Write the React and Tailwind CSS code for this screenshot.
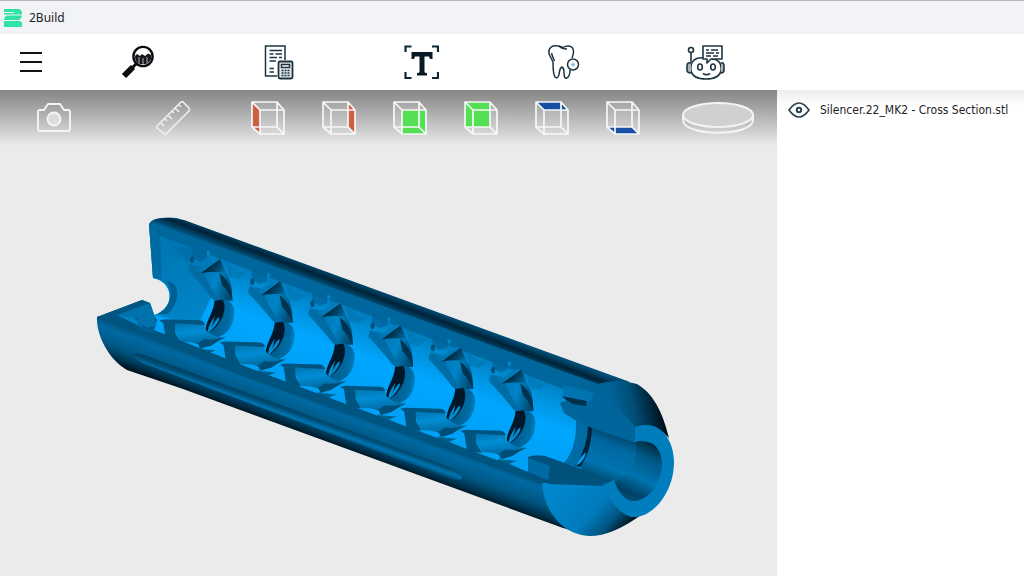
import React from "react";

const cells = [0, 1, 2, 3, 4, 5];

function Logo() {
  return (
    <svg viewBox="0 0 18 18" className="h-[18px] w-[18px]" fill="#2fe3a4" aria-hidden="true">
      <path d="M0 0H14Q18 0 18 4.500V5.500H0V4H10V3H0Z" />
      <path d="M3 6.500H18Q17.500 9.500 15 11H0Q0 8 3 6.500Z" />
      <path d="M0 12H15Q18 12.500 18 14V18H0Z" />
    </svg>
  );
}

function MenuIcon() {
  return (
    <svg viewBox="0 0 24 24" className="h-6 w-6" stroke="#111" strokeWidth="2" aria-hidden="true">
      <path d="M1 3H23M1 12H23M1 21H23" />
    </svg>
  );
}

function InspectIcon() {
  return (
    <svg viewBox="0 0 36 36" className="h-9 w-9" fill="none" aria-hidden="true">
      <circle cx="24" cy="12.500" r="9.600" stroke="#0b0d10" strokeWidth="2.400" />
      <path d="M16 12L18 10L21 12L23 10L26 12L29 9.500L32 11V15Q30 19 27 20H20Q16 18 16 12Z" fill="#14171b" />
      <path d="M20 13V20M24 14V21M28 13V19" stroke="#b5b5b5" strokeWidth="1" />
      <path d="M17 20L13 24" stroke="#0b0d10" strokeWidth="3" />
      <path d="M14 23L5 32" stroke="#0b0d10" strokeWidth="6" />
    </svg>
  );
}

function QuoteIcon() {
  return (
    <svg viewBox="0 0 36 36" className="h-9 w-9" fill="none" stroke="#1d3440" strokeWidth="1.500" aria-hidden="true">
      <path d="M16 32H4.500V2H24V16" />
      <path d="M8.500 6.500H21M8.500 10H12.500M14.500 10H21M8.500 13.500H16M18 13.500H21M8.500 17H15M8.500 24.500H13M8.500 28H13" />
      <rect x="17.500" y="17.500" width="14" height="17" rx="1.500" strokeWidth="1.800" fill="#e3e7e9" />
      <rect x="20.500" y="20.500" width="8" height="3" fill="#fff" />
      <path d="M20.500 26.500H28.500M20.500 29H28.500M20.500 31.500H28.500" strokeDasharray="2 1" />
    </svg>
  );
}

function TextIcon() {
  return (
    <svg viewBox="0 0 36 36" className="h-9 w-9" aria-hidden="true">
      <path d="M2.500 8V2.500H8.500M29 2.500H35V8M35 28V34H29M8.500 34H2.500V28" fill="none" stroke="#102833" strokeWidth="2.200" />
      <path d="M8.500 8H29.500V15H27L26 12.500H21.500V28Q21.500 29 24 29V31.500H14V29Q16.500 29 16.500 28V12.500H12L11 15H8.500Z" fill="#081a23" />
    </svg>
  );
}

function ToothIcon() {
  return (
    <svg viewBox="0 0 36 36" className="h-9 w-9" fill="none" stroke="#1d3440" strokeWidth="1.500" strokeLinejoin="round" aria-hidden="true">
      <path d="M27 14C29 10 30 3 24 2Q21 1.500 18 3.500Q13 1 8 2Q3 4 4 10Q6 14 8 18C8 24 8 30 10 33Q12 35 13.500 32C15 28 14 24 17 23Q19 24 19 29Q19 35 22 34Q25 32 25 26" />
      <path d="M14 2Q17 5 22 5M6.500 9Q7.500 13 9.500 17" />
      <circle cx="28" cy="20.500" r="5.500" />
      <path d="M28 18.500V22.500M26 20.500H30" stroke="#7cbde2" strokeWidth="1.300" />
    </svg>
  );
}

function RobotIcon() {
  return (
    <svg viewBox="0 0 40 36" className="h-9 w-10" fill="none" stroke="#1d3440" strokeWidth="1.600" strokeLinejoin="round" aria-hidden="true">
      <path d="M20 14Q13 13 9 16Q5 20 6 27Q8 35 21 35Q34 35 36 27Q37 20 33 17Q31 15 27 15" />
      <path d="M6 19Q2 18 2 22V26Q2 29 6 29M36 19Q39 18 39 22V26Q39 29 36 29" fill="#a9b3b8" />
      <circle cx="6" cy="6" r="2.500" />
      <path d="M6 9V18" />
      <path d="M18 2H37V15H26L22 19V15H18Z" fill="#fff" />
      <path d="M21 6H24M26 6H33M21 9H29M31 9H34M21 12H26M28 12H33" />
      <ellipse cx="15" cy="23" rx="2.300" ry="3" />
      <ellipse cx="28" cy="23" rx="2.300" ry="3" />
      <path d="M18 29.500Q21.500 32 25 29.500" />
    </svg>
  );
}

function CameraIcon() {
  return (
    <svg viewBox="0 0 36 32" className="h-8 w-9" fill="none" stroke="#f5f5f5" strokeWidth="1.900" strokeLinejoin="round" aria-hidden="true">
      <path d="M4 8H8L12 2H24L28 8H32Q34 8 34 10V27Q34 29 32 29H4Q2 29 2 27V10Q2 8 4 8Z" />
      <circle cx="18" cy="17" r="6.500" fill="#dcdcdc" />
    </svg>
  );
}

function RulerIcon() {
  return (
    <svg viewBox="0 0 36 36" className="h-9 w-9" fill="none" stroke="#f0f0f0" strokeWidth="1.600" strokeLinejoin="round" aria-hidden="true">
      <path d="M2 26L26 2Q28 1 29 3L34 8Q35 10 34 11L11 34Q9 35 8 33L2 28Q1 27 2 26Z" />
      <path d="M6 23L9 26M10 19L12 21M13 15L17 19M17 11L19 13M20 8L24 12M24 5L26 7" />
    </svg>
  );
}

function CubeIcon({ face, color }) {
  return (
    <svg viewBox="0 0 36 36" className="h-9 w-9" fill="none" stroke="#f7f7f7" strokeWidth="1.700" strokeLinejoin="round" aria-hidden="true">
      <path d="M2 2H27L34 10V34H10L2 27Z" fill="#ffffff" fillOpacity=".12" stroke="none" />
      <path d={face} fill={color} stroke="none" />
      <path d="M2 2H27V27H2ZM10 10H34V34H10ZM2 2L10 10M27 2L34 10M2 27L10 34M27 27L34 34" />
    </svg>
  );
}

function PlateIcon() {
  return (
    <svg viewBox="0 0 76 36" className="h-9 w-[76px]" fill="none" stroke="#f4f4f4" strokeWidth="2" aria-hidden="true">
      <path d="M3 15V20C3 37 73 37 73 20V15" />
      <ellipse cx="38" cy="15" rx="35" ry="12" fill="#d0d0d0" />
    </svg>
  );
}

function EyeIcon() {
  return (
    <svg viewBox="0 0 22 18" className="h-[18px] w-[22px]" fill="none" stroke="#29434f" strokeWidth="1.700" aria-hidden="true">
      <path d="M1 9Q11-5 21 9Q11 23 1 9Z" />
      <circle cx="11" cy="9" r="2.200" strokeWidth="2" />
    </svg>
  );
}

function Gradient({ id, from, to, stops }) {
  return (
    <linearGradient id={id} gradientUnits="userSpaceOnUse" x1={from[0]} y1={from[1]} x2={to[0]} y2={to[1]}>
      {stops.map(([at, color]) => (
        <stop key={at} offset={at} stopColor={color} />
      ))}
    </linearGradient>
  );
}

function Cell({ index }) {
  return (
    <g transform={`translate(${220 + index * 60.2} ${259 + index * 22.1}) scale(.3333)`}>
      <path d="M-85 -35L-35 -22L-40 0L-62 8L-85 -5Z" fill="#006399" opacity=".75" />
      <path d="M-40 -25L-28 -20L-38 -7Z" fill="#0088ce" />
      <ellipse cx="-84" cy="2" rx="6" ry="10" fill="#00517c" />
      <path d="M18 10L50 38L76 42L55 62L25 55Z" fill="#006ca6" opacity=".4" />
      <path d="M-92 15L-52 23L-20 0L0 0L18 42Q38 70 37 125L-15 126L-97 34Z" fill="url(#baffle)" />
      <path d="M-55 42L-48 41Q-35 75 -2 122L-15 126Q-26 118 -32 108L-92 30L-90 16Z" fill="#006ca5" />
      <path d="M-58 43L0 0L18 42Q-20 35 -58 43Z" fill="url(#wedge)" />
      <path d="M-2 42Q38 72 37 126Q25 95 6 78Z" fill="#00334f" />
      <path d="M-15 126C23 111 49 137 42 171C38 216 3 242 -40 240L-42 225C-10 210 17 158 10 124Z" fill="url(#ring)" />
      <path d="M-17 125L9 122C24 156 0 207 -42 226C-49 190 -18 164 -17 125Z" fill="#00182a" />
      <path d="M-16 172C-28 189 -39 209 -36 223C-12 203 0 185 -2 174C-11 179 -18 190 -24 205Q-19 184 -16 172Z" fill="#008bd1" />
      <path d="M-140 190L-49 194Q-46 225 0 234L18 236L-60 270L-87 250L-125 248Z" fill="url(#tube)" />
      <path d="M-182 184L-165 181L-60 184Q-48 186 -45 198L-136 193L-134 222L-119 250L-162 246L-170 192Z" fill="#005480" />
      <path d="M18 230L-27 260L-65 270L-71 256L-47 240Q-12 246 18 230Z" fill="#004d76" />
      <path d="M-90 250L-66 256L-58 272Z" fill="#00a7ff" />
      <path d="M-70 269L-12 274L-35 283L-3 298L-68 284Z" fill="#00618f" />
    </g>
  );
}

function Model() {
  return (
    <svg viewBox="0 90 777 486" className="block h-full w-full" role="img" aria-label="3D model preview">
      <defs>
        <Gradient id="cavity" from={[350, 285]} to={[313, 387]} stops={[[0, "#006ba3"], [0.18, "#007bbb"], [0.38, "#0093de"], [0.58, "#00a6ff"], [1, "#00a0f5"]]} />
        <Gradient id="endWall" from={[170, 250]} to={[205, 335]} stops={[[0, "#0077b5"], [1, "#0088ce"]]} />
        <Gradient id="topWall" from={[300, 260]} to={[294, 276]} stops={[[0, "#00507a"], [0.45, "#002237"], [0.75, "#004365"], [1, "#00618f"]]} />
        <Gradient id="shell" from={[300, 391]} to={[286, 429]} stops={[[0, "#00547f"], [0.2, "#0069a1"], [0.55, "#005784"], [0.8, "#003450"], [1, "#000c14"]]} />
        <Gradient id="baffle" from={[-80, 40]} to={[35, 80]} stops={[[0, "#0070ab"], [0.6, "#0084c8"], [1, "#004e78"]]} />
        <Gradient id="wedge" from={[-25, 15]} to={[15, 45]} stops={[[0, "#002b43"], [0.45, "#004a71"], [1, "#0077b5"]]} />
        <Gradient id="ring" from={[-10, 180]} to={[44, 190]} stops={[[0, "#005f90"], [0.65, "#006ca5"], [1, "#0087ce"]]} />
        <Gradient id="tube" from={[-80, 190]} to={[-70, 270]} stops={[[0, "#0077b3"], [0.35, "#008dd5"], [1, "#005c8b"]]} />
        <Gradient id="capTop" from={[612, 407]} to={[662, 397]} stops={[[0, "#006499"], [0.4, "#004e77"], [1, "#000a12"]]} />
        <Gradient id="capLow" from={[565, 484]} to={[618, 535]} stops={[[0, "#0086cc"], [0.55, "#007abc"], [0.8, "#005785"], [1, "#001521"]]} />
        <Gradient id="bore" from={[628, 438]} to={[609, 488]} stops={[[0, "#00466b"], [0.25, "#0068a0"], [0.65, "#0073b0"], [1, "#00405f"]]} />
        <Gradient id="boreEnd" from={[652, 440]} to={[625, 495]} stops={[[0, "#001f31"], [0.3, "#005987"], [0.65, "#0073b0"], [1, "#003550"]]} />
        <Gradient id="groove" from={[300, 409]} to={[295, 423]} stops={[[0, "#003653"], [0.4, "#004e77"], [0.7, "#0075b2"], [1, "#004a70"]]} />
      </defs>

      <path d="M149 224Q154 216 177 218L610 377L605 487L550 488L240 376L117 322L142 305L150 303L154 315C175 309 175 282 153 278Z" fill="url(#cavity)" />
      <path d="M598 384L637 390L664 436L670 462L650 505L605 488L580 467L590 420Z" fill="#005a88" />
      <path d="M149 224L160 228L205 245L222 275L198 325L154 315C175 309 175 282 153 278Z" fill="url(#endWall)" />
      <path d="M149 224L160 230L162 279L153 278Z" fill="#006ba3" />
      <path d="M165 280C175 289 172 307 158 314L168 314C181 301 180 284 168 281Z" fill="#005f92" />
      <path d="M160 233L178 250L180 248L173 244L205 253L202 263L194 257L187 262Z" fill="#006ca6" opacity=".65" />
      <path d="M149 225Q162 223 177 229L600 385L590 399L160 236Z" fill="#006397" opacity=".8" />
      <path d="M149 225Q150 217 171 218L184 220L630 382L598 384L168 228Q156 222 149 225Z" fill="url(#topWall)" />

      {cells.map((index) => (
        <Cell key={index} index={index} />
      ))}

      <path d="M583 423L589 426Q585 458 575 466L564 463Q577 448 576 420Z" fill="#006ca6" />
      <path d="M588 425L593 428Q592 454 580 467L575 466Q588 447 588 425Z" fill="#00253a" />
      <path d="M586 452Q578 459 576 466Q585 461 586 452Z" fill="#00a0f5" />
      <path d="M592 428L635 442L648 444L635 499L617 487L613 480L580 467Q591 453 592 428Z" fill="url(#bore)" />
      <path d="M635 440L655 444L666 464L656 494L636 508L618 500L611 482C630 480 640 460 635 440Z" fill="url(#boreEnd)" />

      <path d="M97 317L142 300L150 303L154 315L157 320L154 330L260 372L550 480L600 484L592 536L563 528L183 389L127 370C108 359 96 334 97 317Z" fill="url(#shell)" />
      <path d="M97 317L142 300L150 303L111 317Z" fill="#005681" />
      <path d="M150 303L155 317L156 326L147 328L135 320L139 319L117 315Z" fill="#0073ad" />
      <path d="M97 317L117 315L240 367L520 470L552 483L540 484L240 375Z" fill="#005580" />
      <path d="M117 315L134 318L145 329Z" fill="#0082c6" />
      <path d="M135 318L141 327L153 329L153 333L142 331Z" fill="#005d8d" />
      <path d="M133 354Q136 352 144 355L452 468Q462 473 462 479Q456 481 443 476L145 364Q134 359 133 354Z" fill="url(#groove)" />

      <path d="M598 384Q617 378 637 384C656 395 664 418 669 438Q654 422 635 429Z" fill="url(#capTop)" />
      <path d="M598 384L635 427L636 443L592 428L575 420L564 413L560 403L568 400L586 405L594 393L564 383Z" fill="#00659a" />
      <path d="M564 385L594 393L590 402L563 395Z" fill="#0074b1" />
      <path d="M562 396L587 401L586 406L573 404L566 400Z" fill="#00304a" />

      <path d="M542 483L603 484L612 479C613 505 621 517 641 515Q612 536 590 536C562 535 544 511 542 483Z" fill="url(#capLow)" />
      <path d="M528 457Q535 454 545 456L614 480L603 486L550 484L520 474L528 472Z" fill="#00517b" />
      <path d="M528 458L550 466L548 480L528 472Z" fill="#006ba2" />
      <path d="M618 490L640 498L655 490L650 505L634 509L620 502Z" fill="#004a70" />
      <path d="M635 427C660 418 674 440 674 462C674 492 653 519 631 517Q615 512 603 485L614 480C619 494 625 501 635 501C650 500 662 480 662 464C662 447 650 437 635 442Z" fill="#007dbd" />
    </svg>
  );
}

const navItems = [
  ["Inspect", InspectIcon],
  ["Quote", QuoteIcon],
  ["Text", TextIcon],
  ["Dental", ToothIcon],
  ["Assistant", RobotIcon],
];

const views = [
  ["Left view", "M2 2L10 10V34L2 27Z", "#cf5f42"],
  ["Right view", "M27 2L34 10V34L27 27Z", "#cf5f42"],
  ["Front view", "M10 10H34V34H10Z", "#55df55"],
  ["Back view", "M2 2H27V27H2Z", "#55df55"],
  ["Top view", "M2 2H27L34 10H10Z", "#174fa5"],
  ["Bottom view", "M2 27H27L34 34H10Z", "#174fa5"],
];

export default function App() {
  return (
    <div className="flex min-h-screen flex-col bg-white font-['Noto_Sans',sans-serif] text-[#1f2328]">
      <div className="flex h-[34px] shrink-0 items-center gap-[7px] border-t border-[#b9b4bd] bg-[#f1f3f7] px-1">
        <Logo />
        <h1 className="text-xs">2Build</h1>
      </div>

      <header className="flex h-14 shrink-0 items-center bg-white">
        <button type="button" aria-label="Menu" className="flex w-[62px] justify-center">
          <MenuIcon />
        </button>
        <nav className="ml-1 flex">
          {navItems.map(([label, Icon]) => (
            <button key={label} type="button" aria-label={label} className="flex w-[142px] justify-center">
              <Icon />
            </button>
          ))}
        </nav>
      </header>

      <div className="flex flex-1">
        <main className="relative flex-1 bg-[#ebebeb]">
          <Model />
          <div className="absolute inset-x-0 top-0 flex h-14 items-center bg-linear-to-b from-[#858585] to-[#ebebeb]">
            <button type="button" aria-label="Take screenshot" className="flex w-[108px] justify-center">
              <CameraIcon />
            </button>
            <button type="button" aria-label="Measure" className="ml-1.5 flex w-[118px] justify-center">
              <RulerIcon />
            </button>
            {views.map(([label, face, color]) => (
              <button key={label} type="button" aria-label={label} className="flex w-[71px] justify-center">
                <CubeIcon face={face} color={color} />
              </button>
            ))}
            <button type="button" aria-label="Build plate" className="flex flex-1 justify-center">
              <PlateIcon />
            </button>
          </div>
        </main>

        <aside className="w-[247px] shrink-0 bg-linear-to-b from-[#ececec] to-white to-[16px] px-[11px] py-2.5">
          <ul>
            <li className="flex items-center gap-2.5">
              <button type="button" aria-label="Toggle visibility">
                <EyeIcon />
              </button>
              <span className="font-['DejaVu_Sans_Condensed','Noto_Sans',sans-serif] text-xs leading-5 whitespace-nowrap">
                Silencer.22_MK2 - Cross Section.stl
              </span>
            </li>
          </ul>
        </aside>
      </div>
    </div>
  );
}
